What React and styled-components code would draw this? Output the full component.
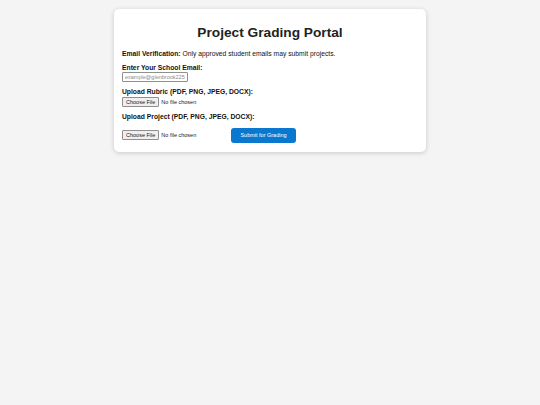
import React from "react";
import styled, { createGlobalStyle } from "styled-components";

const GlobalStyle = createGlobalStyle`
  html, body {
    margin: 0;
    padding: 0;
    background: #f4f4f4;
    font-family: "Liberation Sans", Arial, sans-serif;
  }
`;

const Page = styled.div`
  display: flex;
  justify-content: center;
  align-items: flex-start;
  padding-top: 9px;
  min-height: 405px;
  box-sizing: border-box;
`;

const Card = styled.div`
  width: 312px;
  box-sizing: border-box;
  background: #fff;
  border-radius: 5px;
  box-shadow: 0 1px 5px rgba(0, 0, 0, 0.18);
  padding: 16px 8px 9px;
  font-size: 6.75px;
  line-height: 1.15;
  color: #111;
`;

const Title = styled.h1`
  margin: 0 0 9px;
  text-align: center;
  font-size: 13.7px;
  line-height: 1.15;
  font-weight: bold;
  color: #222;
`;

const Note = styled.p`
  margin: 0 0 6px;
  font-size: 6.75px;
`;

const Label = styled.label`
  display: block;
  font-size: 6.75px;
  font-weight: bold;
  margin-bottom: 1px;
`;

const Field = styled.div`
  display: flex;
  flex-direction: column;
  align-items: flex-start;
  margin-bottom: 6px;
`;

const EmailInput = styled.input`
  width: 66px;
  height: 10px;
  box-sizing: border-box;
  font-family: inherit;
  font-size: 5.5px;
  padding: 0 2px;
  border: 1px solid #8f8f8f;
  border-radius: 1px;
  &::placeholder {
    color: #8a8a8a;
  }
`;

const FileInput = styled.input`
  font-family: inherit;
  font-size: 5.5px;
  color: #222;
  &::file-selector-button {
    font-family: inherit;
    font-size: 5.5px;
    height: 10px;
    padding: 0 3px;
    margin-right: 2px;
    border: 1px solid #8f8f8f;
    border-radius: 1px;
    background: #efefef;
    color: #222;
  }
`;

const SubmitRow = styled.div`
  display: flex;
  align-items: center;
  margin-top: 7px;
`;

const SubmitButton = styled.button`
  margin-left: 4px;
  width: 65px;
  height: 15px;
  border: none;
  border-radius: 3px;
  background: #0b78d0;
  color: #fff;
  font-family: inherit;
  font-size: 5.5px;
  cursor: pointer;
`;

export default function App() {
  return (
    <>
      <GlobalStyle />
      <Page>
        <Card>
          <Title>Project Grading Portal</Title>
          <Note>
            <strong>Email Verification:</strong> Only approved student emails may submit projects.
          </Note>
          <Field>
            <Label>Enter Your School Email:</Label>
            <EmailInput type="email" placeholder="example@glenbrook225.org" />
          </Field>
          <Field>
            <Label>Upload Rubric (PDF, PNG, JPEG, DOCX):</Label>
            <FileInput type="file" accept=".pdf,.png,.jpeg,.jpg,.docx" />
          </Field>
          <Label>Upload Project (PDF, PNG, JPEG, DOCX):</Label>
          <SubmitRow>
            <FileInput type="file" accept=".pdf,.png,.jpeg,.jpg,.docx" />
            <SubmitButton>Submit for Grading</SubmitButton>
          </SubmitRow>
        </Card>
      </Page>
    </>
  );
}
